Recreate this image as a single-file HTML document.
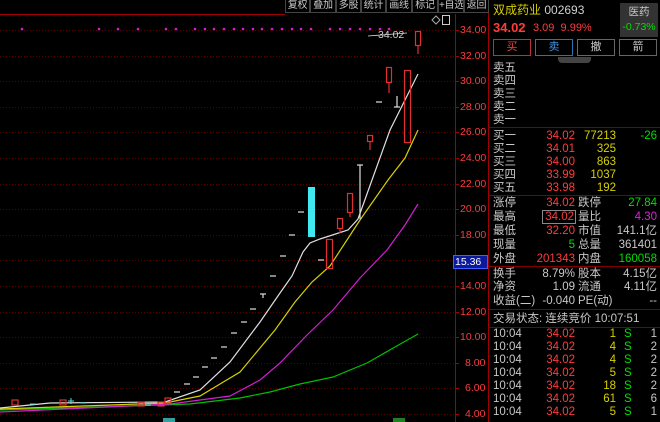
<!DOCTYPE html>
<html><head><meta charset="utf-8"><style>
*{margin:0;padding:0;box-sizing:border-box}
body{width:660px;height:422px;background:#000;overflow:hidden;position:relative;font-family:"Liberation Sans","Noto Sans CJK SC",sans-serif;font-size:11.5px;color:#c8c8c8}
.a{position:absolute;white-space:nowrap;line-height:13px}
.r{color:#ff3c3c}.y{color:#d8d000}.g{color:#00dd00}.m{color:#e020e0}.w{color:#d0d0d0}
.tb{position:absolute;top:0;height:13px;border:1px solid #444;border-top:none;color:#c8c8c8;font-size:10px;line-height:12px;text-align:center;white-space:nowrap;overflow:hidden;letter-spacing:-0.3px}
.hl{position:absolute;left:489px;width:171px;height:1px;background:#800000}
.btn{position:absolute;top:39px;height:17px;width:38px;border:1px solid #666;text-align:center;line-height:15px;font-size:11px}
.rt{text-align:right}
</style></head><body>
<svg width="660" height="422" style="position:absolute;left:0;top:0">
<g stroke="#5a0000" stroke-dasharray="1,2" stroke-width="1">
<line x1="0" y1="30.5" x2="455" y2="30.5"/><line x1="0" y1="56.5" x2="455" y2="56.5"/><line x1="0" y1="81.5" x2="455" y2="81.5"/><line x1="0" y1="107.5" x2="455" y2="107.5"/><line x1="0" y1="132.5" x2="455" y2="132.5"/><line x1="0" y1="158.5" x2="455" y2="158.5"/><line x1="0" y1="184.5" x2="455" y2="184.5"/><line x1="0" y1="209.5" x2="455" y2="209.5"/><line x1="0" y1="235.5" x2="455" y2="235.5"/><line x1="0" y1="260.5" x2="455" y2="260.5"/><line x1="0" y1="286.5" x2="455" y2="286.5"/><line x1="0" y1="312.5" x2="455" y2="312.5"/><line x1="0" y1="337.5" x2="455" y2="337.5"/><line x1="0" y1="363.5" x2="455" y2="363.5"/><line x1="0" y1="388.5" x2="455" y2="388.5"/><line x1="0" y1="414.5" x2="455" y2="414.5"/>
</g>
<line x1="0" y1="14.5" x2="285" y2="14.5" stroke="#a00000"/>
<line x1="455.5" y1="14" x2="455.5" y2="422" stroke="#a00000"/>
<line x1="488.5" y1="0" x2="488.5" y2="422" stroke="#a00000"/>
<g stroke="#a00000"><line x1="455" y1="30.5" x2="459" y2="30.5"/><line x1="455" y1="56.5" x2="459" y2="56.5"/><line x1="455" y1="81.5" x2="459" y2="81.5"/><line x1="455" y1="107.5" x2="459" y2="107.5"/><line x1="455" y1="132.5" x2="459" y2="132.5"/><line x1="455" y1="158.5" x2="459" y2="158.5"/><line x1="455" y1="184.5" x2="459" y2="184.5"/><line x1="455" y1="209.5" x2="459" y2="209.5"/><line x1="455" y1="235.5" x2="459" y2="235.5"/><line x1="455" y1="286.5" x2="459" y2="286.5"/><line x1="455" y1="312.5" x2="459" y2="312.5"/><line x1="455" y1="337.5" x2="459" y2="337.5"/><line x1="455" y1="363.5" x2="459" y2="363.5"/><line x1="455" y1="388.5" x2="459" y2="388.5"/><line x1="455" y1="414.5" x2="459" y2="414.5"/></g>
<g fill="#d020d0">
<circle cx="22" cy="29" r="1.3"/><circle cx="99" cy="29" r="1.3"/><circle cx="118" cy="29" r="1.3"/><circle cx="138" cy="29" r="1.3"/><circle cx="166" cy="29" r="1.3"/><circle cx="176" cy="29" r="1.3"/><circle cx="195" cy="29" r="1.3"/><circle cx="205" cy="29" r="1.3"/><circle cx="214" cy="29" r="1.3"/><circle cx="224" cy="29" r="1.3"/><circle cx="234" cy="29" r="1.3"/><circle cx="243" cy="29" r="1.3"/><circle cx="253" cy="29" r="1.3"/><circle cx="262" cy="29" r="1.3"/><circle cx="272" cy="29" r="1.3"/><circle cx="282" cy="29" r="1.3"/><circle cx="292" cy="29" r="1.3"/><circle cx="301" cy="29" r="1.3"/><circle cx="311" cy="29" r="1.3"/><circle cx="330" cy="29" r="1.3"/><circle cx="340" cy="29" r="1.3"/><circle cx="350" cy="29" r="1.3"/><circle cx="360" cy="29" r="1.3"/><circle cx="370" cy="29" r="1.3"/><circle cx="380" cy="29" r="1.3"/><circle cx="389" cy="29" r="1.3"/>
</g>
<g fill="none" stroke-width="1.2">
<polyline stroke="#00c000" points="0,410 130,406 190,404 240,398 270,392 300,384 333,377 367,363 395,347 418,334"/>
<polyline stroke="#d020d0" points="0,412 170,404 230,396 260,380 280,363 307,335 333,310 360,278 387,250 405,225 418,204"/>
<polyline stroke="#d8d000" points="0,409 165,403 200,396 240,372 275,330 295,302 312,282 330,266 360,220 388,180 405,158 418,130"/>
<polyline stroke="#e0e0e0" points="0,408 50,403 165,402 200,390 230,362 260,322 280,293 292,276 303,252 310,243 320,239 348,230 358,219 372,180 390,130 405,100 418,74"/>
</g>
<g stroke="#e0e0e0" stroke-width="1.2">
<line x1="174" y1="392" x2="180" y2="392"/><line x1="184" y1="384" x2="190" y2="384"/><line x1="193" y1="377" x2="199" y2="377"/><line x1="202" y1="367" x2="208" y2="367"/><line x1="211" y1="358" x2="217" y2="358"/><line x1="221" y1="347" x2="227" y2="347"/><line x1="231" y1="333" x2="237" y2="333"/><line x1="241" y1="322" x2="247" y2="322"/><line x1="250" y1="309" x2="256" y2="309"/><line x1="260" y1="294" x2="266" y2="294"/><line x1="263" y1="294" x2="263" y2="298"/><line x1="270" y1="276" x2="276" y2="276"/><line x1="280" y1="256" x2="286" y2="256"/><line x1="289" y1="235" x2="295" y2="235"/><line x1="298" y1="212" x2="304" y2="212"/><line x1="318" y1="260" x2="324" y2="260"/>
<line x1="357" y1="165" x2="363" y2="165"/><line x1="360" y1="165" x2="360" y2="219"/>
<line x1="376" y1="102" x2="382" y2="102"/><line x1="394" y1="107" x2="400" y2="107"/><line x1="397" y1="96" x2="397" y2="107"/>
<line x1="368" y1="36" x2="407" y2="33" stroke-width="0.8"/>
</g>
<rect x="308" y="187" width="7" height="50" fill="#40e8f0"/>
<g fill="none" stroke="#e03030" stroke-width="1.2">
<rect x="326.5" y="239.5" width="6" height="29"/>
<rect x="337.5" y="218.5" width="5" height="10"/><line x1="340" y1="229" x2="340" y2="233"/>
<rect x="347.5" y="193.5" width="5" height="19"/><line x1="350" y1="213" x2="350" y2="217"/>
<rect x="367.5" y="135.5" width="5" height="6"/><line x1="370" y1="142" x2="370" y2="150"/>
<rect x="386.5" y="67.5" width="5" height="15"/><line x1="389" y1="83" x2="389" y2="93"/>
<rect x="404.5" y="70.5" width="6" height="72"/>
<rect x="415.5" y="31.5" width="5" height="14"/><line x1="418" y1="46" x2="418" y2="54"/>
<rect x="12" y="400" width="6" height="5"/><rect x="60" y="400" width="6" height="5"/><rect x="138" y="402" width="6" height="4"/><rect x="158" y="402" width="6" height="4"/><rect x="165" y="398" width="6" height="5"/>
</g>
<g stroke="#40e0e0"><line x1="68" y1="401" x2="74" y2="401"/><line x1="71" y1="398" x2="71" y2="404"/><line x1="80" y1="403" x2="86" y2="403"/><line x1="30" y1="404" x2="36" y2="404"/><line x1="145" y1="405" x2="151" y2="405"/></g>
<path d="M432 20 L436 16 L440 20 L436 24Z" fill="none" stroke="#aaa"/>
<rect x="442.5" y="15.5" width="7" height="9" fill="none" stroke="#ccc"/>
<rect x="163" y="418" width="12" height="4" fill="#30a0a0"/><rect x="393" y="418" width="12" height="4" fill="#208020"/>
</svg>
<div class="tb" style="left:285px;width:25px">复权</div>
<div class="tb" style="left:310px;width:26px">叠加</div>
<div class="tb" style="left:336px;width:25px">多股</div>
<div class="tb" style="left:361px;width:25px">统计</div>
<div class="tb" style="left:386px;width:26px">画线</div>
<div class="tb" style="left:412px;width:26px">标记</div>
<div class="tb" style="left:438px;width:26px">+自选</div>
<div class="tb" style="left:464px;width:25px">返回</div>
<div class="a w" style="left:378px;top:29px;font-size:10.5px">34.02</div>
<div class="a r" style="left:460px;top:24px;font-size:10.5px">34.00</div>
<div class="a r" style="left:460px;top:50px;font-size:10.5px">32.00</div>
<div class="a r" style="left:460px;top:75px;font-size:10.5px">30.00</div>
<div class="a r" style="left:460px;top:101px;font-size:10.5px">28.00</div>
<div class="a r" style="left:460px;top:126px;font-size:10.5px">26.00</div>
<div class="a r" style="left:460px;top:152px;font-size:10.5px">24.00</div>
<div class="a r" style="left:460px;top:178px;font-size:10.5px">22.00</div>
<div class="a r" style="left:460px;top:203px;font-size:10.5px">20.00</div>
<div class="a r" style="left:460px;top:229px;font-size:10.5px">18.00</div>
<div class="a" style="left:453px;top:255px;width:35px;height:14px;background:#0a1a9a;border:1px solid #4060ff;color:#fff;font-size:10.5px;padding-left:1px">15.36</div>
<div class="a r" style="left:460px;top:280px;font-size:10.5px">14.00</div>
<div class="a r" style="left:460px;top:306px;font-size:10.5px">12.00</div>
<div class="a r" style="left:460px;top:331px;font-size:10.5px">10.00</div>
<div class="a r" style="left:465px;top:357px;font-size:10.5px">8.00</div>
<div class="a r" style="left:465px;top:382px;font-size:10.5px">6.00</div>
<div class="a r" style="left:465px;top:408px;font-size:10.5px">4.00</div>

<div class="a" style="left:493px;top:4px;font-size:12px"><span class="y">双成药业</span> <span class="w">002693</span></div>
<div class="a r" style="left:493px;top:21px;font-size:13px;font-weight:bold">34.02</div>
<div class="a r" style="left:533px;top:22px;font-size:11px">3.09&nbsp; 9.99%</div>
<div class="a" style="left:620px;top:3px;width:38px;height:34px;background:#333;text-align:center;line-height:15px;padding-top:2px;font-size:10.5px">医药<br><span class="g">-0.73%</span></div>
<div class="btn r" style="left:493px;border-color:#c03030">买</div>
<div class="btn" style="left:535px;border-color:#3070b0;color:#4090e0">卖</div>
<div class="btn" style="left:577px">撤</div>
<div class="btn" style="left:619px">箭</div>
<div class="a" style="left:558px;top:57px;width:33px;height:6px;background:#444;border-radius:0 0 4px 4px"></div>
<div class="a" style="left:493px;top:62px">卖五</div>
<div class="a" style="left:493px;top:75px">卖四</div>
<div class="a" style="left:493px;top:88px">卖三</div>
<div class="a" style="left:493px;top:101px">卖二</div>
<div class="a" style="left:493px;top:114px">卖一</div>
<div class="hl" style="top:127px"></div>
<div class="a" style="left:493px;top:130px;width:164px">买一<span class="a r rt" style="left:32px;width:50px;top:0">34.02</span><span class="a y rt" style="left:85px;width:38px;top:0">77213</span><span class="a g rt" style="left:130px;width:34px;top:0">-26</span></div>
<div class="a" style="left:493px;top:143px;width:164px">买二<span class="a r rt" style="left:32px;width:50px;top:0">34.01</span><span class="a y rt" style="left:85px;width:38px;top:0">325</span></div>
<div class="a" style="left:493px;top:156px;width:164px">买三<span class="a r rt" style="left:32px;width:50px;top:0">34.00</span><span class="a y rt" style="left:85px;width:38px;top:0">863</span></div>
<div class="a" style="left:493px;top:169px;width:164px">买四<span class="a r rt" style="left:32px;width:50px;top:0">33.99</span><span class="a y rt" style="left:85px;width:38px;top:0">1037</span></div>
<div class="a" style="left:493px;top:182px;width:164px">买五<span class="a r rt" style="left:32px;width:50px;top:0">33.98</span><span class="a y rt" style="left:85px;width:38px;top:0">192</span></div>
<div class="hl" style="top:195px"></div>
<div class="a" style="left:493px;top:197px;width:164px">涨停<span class="a r rt" style="left:32px;width:50px;top:0">34.02</span><span class="a" style="left:85px;top:0">跌停</span><span class="a g rt" style="left:115px;width:49px;top:0">27.84</span></div>
<div class="a" style="left:493px;top:211px;width:164px">最高<span class="a r rt" style="left:49px;width:34px;top:-1px;border:1px solid #888;padding-right:1px;height:14px">34.02</span><span class="a" style="left:85px;top:0">量比</span><span class="a m rt" style="left:115px;width:49px;top:0">4.30</span></div>
<div class="a" style="left:493px;top:225px;width:164px">最低<span class="a r rt" style="left:32px;width:50px;top:0">32.20</span><span class="a" style="left:85px;top:0">市值</span><span class="a rt" style="left:115px;width:49px;top:0">141.1亿</span></div>
<div class="a" style="left:493px;top:239px;width:164px">现量<span class="a g rt" style="left:32px;width:50px;top:0">5</span><span class="a" style="left:85px;top:0">总量</span><span class="a rt" style="left:115px;width:49px;top:0">361401</span></div>
<div class="a" style="left:493px;top:253px;width:164px">外盘<span class="a r rt" style="left:32px;width:50px;top:0">201343</span><span class="a" style="left:85px;top:0">内盘</span><span class="a g rt" style="left:115px;width:49px;top:0">160058</span></div>
<div class="hl" style="top:266px"></div>
<div class="a" style="left:493px;top:268px;width:164px">换手<span class="a rt" style="left:32px;width:50px;top:0">8.79%</span><span class="a" style="left:85px;top:0">股本</span><span class="a rt" style="left:115px;width:49px;top:0">4.15亿</span></div>
<div class="a" style="left:493px;top:281px;width:164px">净资<span class="a rt" style="left:32px;width:50px;top:0">1.09</span><span class="a" style="left:85px;top:0">流通</span><span class="a rt" style="left:115px;width:49px;top:0">4.11亿</span></div>
<div class="a" style="left:493px;top:295px;width:164px">收益(二)<span class="a rt" style="left:32px;width:50px;top:0">-0.040</span><span class="a" style="left:85px;top:0">PE(动)</span><span class="a rt" style="left:115px;width:49px;top:0">--</span></div>
<div class="hl" style="top:309px"></div>
<div class="a" style="left:493px;top:313px">交易状态: 连续竞价 10:07:51</div>
<div class="hl" style="top:327px"></div>
<div class="a" style="left:493px;top:328px;width:164px">10:04<span class="a r rt" style="left:32px;width:50px;top:0">34.02</span><span class="a y rt" style="left:95px;width:28px;top:0">1</span><span class="a g" style="left:131px;top:0">S</span><span class="a rt" style="left:150px;width:14px;top:0">1</span></div>
<div class="a" style="left:493px;top:341px;width:164px">10:04<span class="a r rt" style="left:32px;width:50px;top:0">34.02</span><span class="a y rt" style="left:95px;width:28px;top:0">4</span><span class="a g" style="left:131px;top:0">S</span><span class="a rt" style="left:150px;width:14px;top:0">2</span></div>
<div class="a" style="left:493px;top:354px;width:164px">10:04<span class="a r rt" style="left:32px;width:50px;top:0">34.02</span><span class="a y rt" style="left:95px;width:28px;top:0">4</span><span class="a g" style="left:131px;top:0">S</span><span class="a rt" style="left:150px;width:14px;top:0">2</span></div>
<div class="a" style="left:493px;top:367px;width:164px">10:04<span class="a r rt" style="left:32px;width:50px;top:0">34.02</span><span class="a y rt" style="left:95px;width:28px;top:0">5</span><span class="a g" style="left:131px;top:0">S</span><span class="a rt" style="left:150px;width:14px;top:0">2</span></div>
<div class="a" style="left:493px;top:380px;width:164px">10:04<span class="a r rt" style="left:32px;width:50px;top:0">34.02</span><span class="a y rt" style="left:95px;width:28px;top:0">18</span><span class="a g" style="left:131px;top:0">S</span><span class="a rt" style="left:150px;width:14px;top:0">2</span></div>
<div class="a" style="left:493px;top:393px;width:164px">10:04<span class="a r rt" style="left:32px;width:50px;top:0">34.02</span><span class="a y rt" style="left:95px;width:28px;top:0">61</span><span class="a g" style="left:131px;top:0">S</span><span class="a rt" style="left:150px;width:14px;top:0">6</span></div>
<div class="a" style="left:493px;top:406px;width:164px">10:04<span class="a r rt" style="left:32px;width:50px;top:0">34.02</span><span class="a y rt" style="left:95px;width:28px;top:0">5</span><span class="a g" style="left:131px;top:0">S</span><span class="a rt" style="left:150px;width:14px;top:0">1</span></div>
</body></html>
